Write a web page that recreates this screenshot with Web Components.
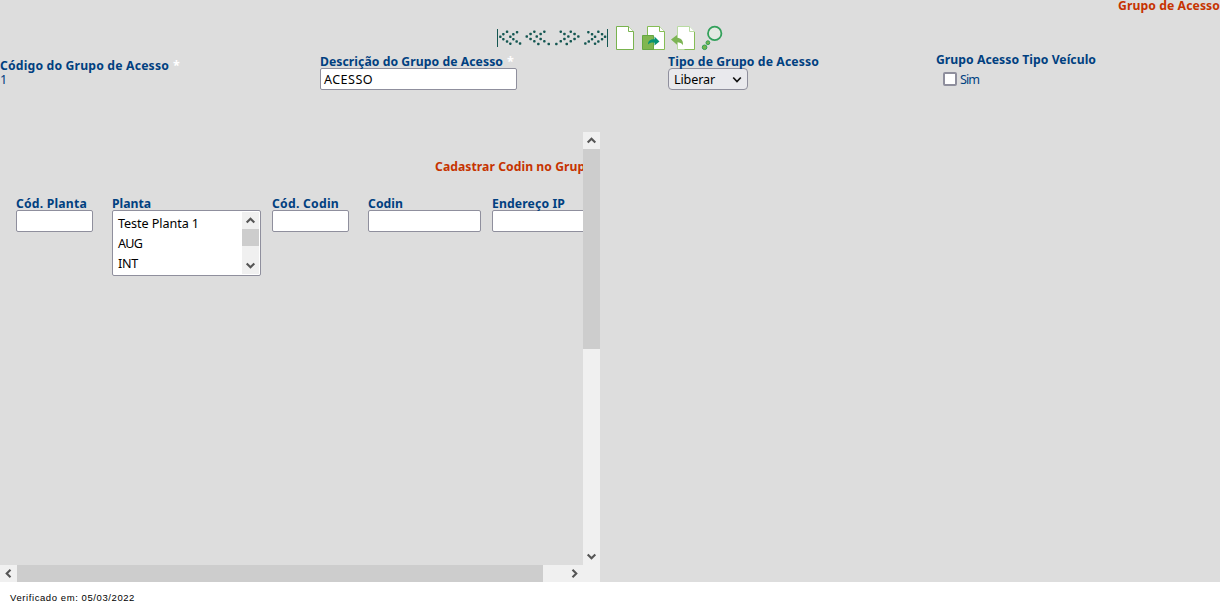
<!DOCTYPE html>
<html lang="pt-BR">
<head>
<meta charset="utf-8">
<title>Grupo de Acesso</title>
<style>
html,body{margin:0;height:100%;overflow:hidden}
body{background:#ddd;color:#004080;font:12.6px/14px "Noto Sans","DejaVu Sans",sans-serif}
</style>
</head>
<body>
<access-page></access-page>
<script>
// Single line of text whose tracking is tuned to a nominal width.
customElements.define('ui-text', class extends HTMLElement {
  connectedCallback() {
    const root = this.attachShadow({mode: 'open'});
    root.innerHTML = `<style>:host{display:block;white-space:pre;height:14px;width:max-content}
      :host([bold]){font-weight:bold;font-size:12.2px}span{display:block;width:max-content}</style><span><slot></slot></span>`;
    const span = root.querySelector('span');
    const want = +this.getAttribute('w');
    if (want) span.style.letterSpacing = (want - span.getBoundingClientRect().width) / this.textContent.length + 'px';
  }
});

customElements.define('ui-field', class extends HTMLElement {
  connectedCallback() {
    this.attachShadow({mode: 'open'}).innerHTML = `<style>
      :host{display:block;flex:none}
      .label{display:flex;height:13px}
      i{font-style:normal;font-weight:bold;color:#fff;margin-left:4px}
    </style><div class="label"><ui-text bold w="${this.getAttribute('lw')}">${this.getAttribute('label')}</ui-text>${this.hasAttribute('required') ? '<i>*</i>' : ''}</div><slot></slot>`;
  }
});

customElements.define('ui-input', class extends HTMLElement {
  connectedCallback() {
    this.attachShadow({mode: 'open'}).innerHTML = `<style>
      :host{display:block;box-sizing:border-box;height:22px;padding:4px 3px;background:#fff;border:1px solid #8f8f9d;border-radius:2px;color:#000}
    </style><slot></slot>`;
  }
});

customElements.define('ui-select', class extends HTMLElement {
  connectedCallback() {
    this.attachShadow({mode: 'open'}).innerHTML = `<style>
      :host{display:flex;box-sizing:border-box;width:80px;height:22px;padding:4px 5px;justify-content:space-between;background:#e9e9ed;border:1px solid #8f8f9d;border-radius:4px;color:#000}
      svg{margin-top:3px}
    </style><slot></slot><svg width="10" height="8"><path d="M1.2 1.5 5 5.5 8.8 1.5" fill="none" stroke="#111" stroke-width="1.7"/></svg>`;
  }
});

customElements.define('ui-arrow', class extends HTMLElement {
  connectedCallback() {
    const turn = {up: 0, right: 90, down: 180, left: 270}[this.getAttribute('dir')];
    this.attachShadow({mode: 'open'}).innerHTML = `<style>:host{display:block;flex:none;width:17px;height:17px;background:#f0f0f0}svg{display:block}</style>
      <svg width="17" height="17"><path transform="rotate(${turn} 8.5 8.5)" d="M4.7 10.5 8.5 6.7 12.3 10.5" fill="none" stroke="#555" stroke-width="2.1"/></svg>`;
  }
});

customElements.define('ui-scrollbar', class extends HTMLElement {
  connectedCallback() {
    const h = this.hasAttribute('horizontal'), size = this.getAttribute('thumb');
    this.attachShadow({mode: 'open'}).innerHTML = `<style>
      :host{display:flex;flex-direction:${h ? 'row' : 'column'};justify-content:space-between;background:#f0f0f0;${h ? 'height' : 'width'}:17px}
      .track{flex:1}.thumb{background:#cdcdcd;${h ? 'height:17px;width' : 'width:17px;height'}:${size}px}
    </style><ui-arrow dir="${h ? 'left' : 'up'}"></ui-arrow><div class="track"><div class="thumb"></div></div><ui-arrow dir="${h ? 'right' : 'down'}"></ui-arrow>`;
  }
});

customElements.define('ui-listbox', class extends HTMLElement {
  connectedCallback() {
    this.attachShadow({mode: 'open'}).innerHTML = `<style>
      :host{display:flex;box-sizing:border-box;width:149px;height:66px;padding:1px;justify-content:space-between;background:#fff;border:1px solid #8f8f9d;border-radius:2px;color:#000}
      .items{display:grid;grid-auto-rows:20px;padding:5px 4px 0;height:57px}
    </style><div class="items"><slot></slot></div><ui-scrollbar thumb="17"></ui-scrollbar>`;
  }
});

customElements.define('ui-checkbox', class extends HTMLElement {
  connectedCallback() {
    this.attachShadow({mode: 'open'}).innerHTML = `<style>
      :host{display:flex;gap:3px;padding:6px 0 0 7px}
      b{box-sizing:border-box;width:14px;height:14px;background:#fff;border:2px solid #8f8f9d;border-radius:2px}
      div{padding-top:1px}
    </style><b></b><div><slot></slot></div>`;
  }
});

customElements.define('nav-toolbar', class extends HTMLElement {
  connectedCallback() {
    const dots = (pts, fx) => pts.map(([x, y]) => `<rect x="${fx(x) - 1.2}" y="${y + 9.6}" width="2.5" height="2.5" rx=".8"/>`).join('');
    const first = [[9.7,1],[6,3.3],[3,6],[6,8.3],[9.7,10.7],[13,12.8],[19.7,1.3],[16,3.5],[13,6],[16,8.3],[19.3,10.7],[22.7,12.7]];
    const prev = [[10.3,.8],[6.5,3.2],[2.7,5.6],[6.5,8.2],[10.3,10.5],[14.3,13.2],[20.3,.8],[16.6,3.2],[12.7,5.6],[16.6,8.2],[20.3,10.5],[24.7,13.2]];
    this.attachShadow({mode: 'open'}).innerHTML = `<style>
      :host{display:flex;height:36px;padding-left:496px}svg{display:block;flex:none}.dots{fill:#155752}
    </style>
    <svg class="dots" width="28" height="36"><path d="M1 9h1v18H1z"/>${dots(first, x => x + 1.3)}</svg>
    <svg class="dots" width="30" height="36">${dots(prev, x => x)}</svg>
    <svg class="dots" width="30" height="36">${dots(prev, x => 27 - x)}</svg>
    <svg class="dots" width="28" height="36"><path d="M23 9h1v18h-1z"/>${dots(first, x => 24 - x)}</svg>
    <svg width="24" height="36" viewBox="612 20 24 36"><path d="M616.5 26.5h12l5 5v18h-17z" fill="#fff" stroke="#79b34e"/><path d="M628.5 26.5v5h5" fill="#fff" stroke="#79b34e"/></svg>
    <svg width="34" height="36" viewBox="636 20 34 36"><path d="M647.5 26.5h12l5 5v18h-17z" fill="#fff" stroke="#85bd55"/><path d="M659.5 26.5v5h5" fill="#fff" stroke="#85bd55"/><path d="M642.5 35.5h11v14h-11z" fill="#80b650" stroke="#65a743"/><path d="M648 44.5c0-4 3-5.5 6.5-5.2V36.5l5 5-5 4v-2.8c-3-.3-4.5 0-6.5 1.8z" fill="#079275"/></svg>
    <svg width="28" height="36" viewBox="670 20 28 36"><path d="M677.5 26.5h12l5 5v18h-17z" fill="#fff" stroke="#b9dba2"/><path d="M689.5 26.5v5h5" fill="#fff" stroke="#b9dba2"/><path d="M694.5 32v17.5h-10" fill="none" stroke="#85bd55"/><path d="M671 39.5l6-4.5v2.8c4.5.3 6.4 3 6 7.5-1.5-2.3-3.2-3-6-3v2.5z" fill="#7cb454"/></svg>
    <svg width="28" height="36" viewBox="698 20 28 36"><circle cx="714.7" cy="33.4" r="6.7" fill="#e4e9e2" stroke="#32a05a" stroke-width="1.8"/><circle cx="707.9" cy="42.7" r="1.9" fill="#75b54f" stroke="#329e55"/><circle cx="704.6" cy="47.3" r="2.3" fill="#75b54f" stroke="#329e55"/></svg>`;
  }
});

customElements.define('codin-panel', class extends HTMLElement {
  connectedCallback() {
    this.attachShadow({mode: 'open'}).innerHTML = `<style>
      :host{display:grid;flex:none;grid-template:433px 17px/583px 17px;width:600px;height:450px;background:#f0f0f0}
      .view{background:#ddd;overflow:hidden}
      .title{padding:28px 0 0 435px;color:#c63300}
      .row{display:flex;padding:23px 0 0 16px}
    </style>
    <div class="view">
      <div class="title"><ui-text bold w="158">Cadastrar Codin no Grupo</ui-text></div>
      <div class="row">
        <ui-field label="Cód. Planta" lw="71" style="width:96px"><ui-input style="width:77px"></ui-input></ui-field>
        <ui-field label="Planta" lw="39" style="width:160px"><ui-listbox><ui-text w="81">Teste Planta 1</ui-text><ui-text w="24">AUG</ui-text><ui-text w="20">INT</ui-text></ui-listbox></ui-field>
        <ui-field label="Cód. Codin" lw="67" style="width:96px"><ui-input style="width:77px"></ui-input></ui-field>
        <ui-field label="Codin" lw="35" style="width:124px"><ui-input style="width:113px"></ui-input></ui-field>
        <ui-field label="Endereço IP" lw="73"><ui-input style="width:113px"></ui-input></ui-field>
      </div>
    </div>
    <ui-scrollbar thumb="200"></ui-scrollbar>
    <ui-scrollbar horizontal thumb="526"></ui-scrollbar>`;
  }
});

customElements.define('access-page', class extends HTMLElement {
  connectedCallback() {
    this.attachShadow({mode: 'open'}).innerHTML = `<style>
      :host{display:flex;flex-direction:column;width:1220px;height:612px}
      header{flex:none;height:20px;display:flex;justify-content:flex-end;line-height:12px;color:#c63300}
      nav-toolbar{flex:none;height:33px}
      .form{flex:none;display:grid;grid-template-columns:320px 348px 268px 1fr;height:79px}
      footer{flex:1;background:#fff;color:#000;padding:9px 10px 0;font:9.5px/14px "Liberation Sans",Arial,sans-serif}
    </style>
    <header><ui-text bold w="102">Grupo de Acesso</ui-text></header>
    <nav-toolbar></nav-toolbar>
    <div class="form">
      <ui-field label="Código do Grupo de Acesso" lw="169" required style="padding-top:6px"><ui-text style="padding-top:1px">1</ui-text></ui-field>
      <ui-field label="Descrição do Grupo de Acesso" lw="183" required style="padding-top:2px"><ui-input style="width:197px"><ui-text w="49">ACESSO</ui-text></ui-input></ui-field>
      <ui-field label="Tipo de Grupo de Acesso" lw="151" style="padding-top:2px"><ui-select><ui-text w="41">Liberar</ui-text></ui-select></ui-field>
      <ui-field label="Grupo Acesso Tipo Veículo" lw="160"><ui-checkbox><ui-text w="19">Sim</ui-text></ui-checkbox></ui-field>
    </div>
    <codin-panel></codin-panel>
    <footer><ui-text w="125">Verificado em: 05/03/2022</ui-text></footer>`;
  }
});
</script>
</body>
</html>
